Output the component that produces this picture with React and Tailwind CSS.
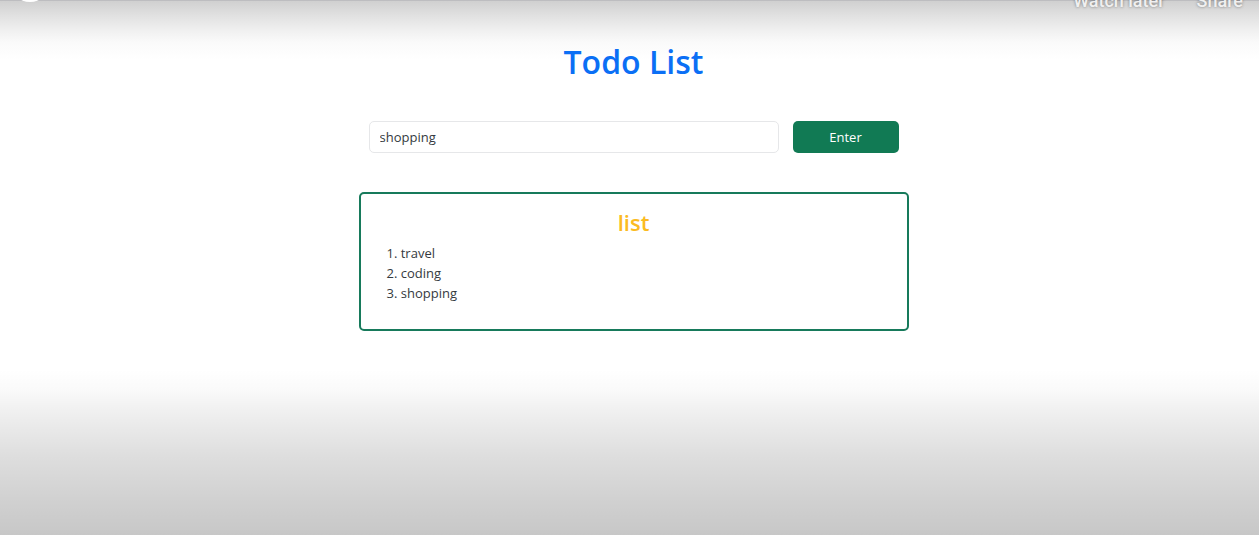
import { useState } from "react";

function VideoOverlay() {
  return (
    <div className="pointer-events-none absolute inset-0 overflow-hidden font-[Roboto,sans-serif]">
      <div className="h-[60px] border-t border-[#bdbdc0] bg-[linear-gradient(to_bottom,#d0d0d0_0%,#e1e1e1_25%,#f0f0f0_50%,#fafafa_70%,#ffffff_100%)]" />
      <div className="absolute inset-x-0 bottom-0 h-[166px] bg-[linear-gradient(to_bottom,rgba(0,0,0,0)_0%,rgba(0,0,0,0.02)_12%,rgba(0,0,0,0.06)_25%,rgba(0,0,0,0.13)_52%,rgba(0,0,0,0.18)_78%,rgba(0,0,0,0.22)_100%)]" />
      <div className="absolute -top-[38px] left-[10px] size-10 rounded-full bg-white" />
      <div className="absolute -top-[11px] right-4 flex gap-8 text-lg/6 font-medium text-[#f0f0f0] [text-shadow:0_0_3px_rgba(0,0,0,0.45)]">
        <span>Watch later</span>
        <span>Share</span>
      </div>
    </div>
  );
}

export default function App() {
  const [items, setItems] = useState(["travel", "coding", "shopping"]);
  const [value, setValue] = useState("shopping");

  const addItem = (event) => {
    event.preventDefault();
    if (value.trim()) setItems([...items, value.trim()]);
  };

  return (
    <div className="relative min-h-screen bg-white font-['Open_Sans',sans-serif] text-[13px]/5 text-[#343a40]">
      <VideoOverlay />
      <main className="relative ml-2 flex flex-col items-center pt-10">
        <h1 className="text-[32px]/[44px] font-semibold text-[#0b6ff5]">Todo List</h1>
        <form
          onSubmit={addItem}
          className="mt-[37px] flex w-full max-w-[550px] gap-[14px] px-[10px]"
        >
          <input
            type="text"
            aria-label="New item"
            value={value}
            onChange={(event) => setValue(event.target.value)}
            className="h-8 min-w-0 flex-1 rounded-[5px] border border-[#e6e7e9] bg-white px-[10px] outline-none"
          />
          <button
            type="submit"
            className="h-8 w-[106px] rounded-[5px] bg-[#117a54] text-white"
          >
            Enter
          </button>
        </form>
        <section className="mt-[39px] w-full max-w-[550px] rounded-[5px] border-2 border-[#177a5b] px-[10px] pt-3 pb-[26px]">
          <h2 className="text-center text-[22px]/8 font-semibold text-[#fbbb21]">list</h2>
          <ol className="mt-[5px] list-inside list-decimal pl-4">
            {items.map((item, index) => (
              <li key={index}>{item}</li>
            ))}
          </ol>
        </section>
      </main>
    </div>
  );
}
